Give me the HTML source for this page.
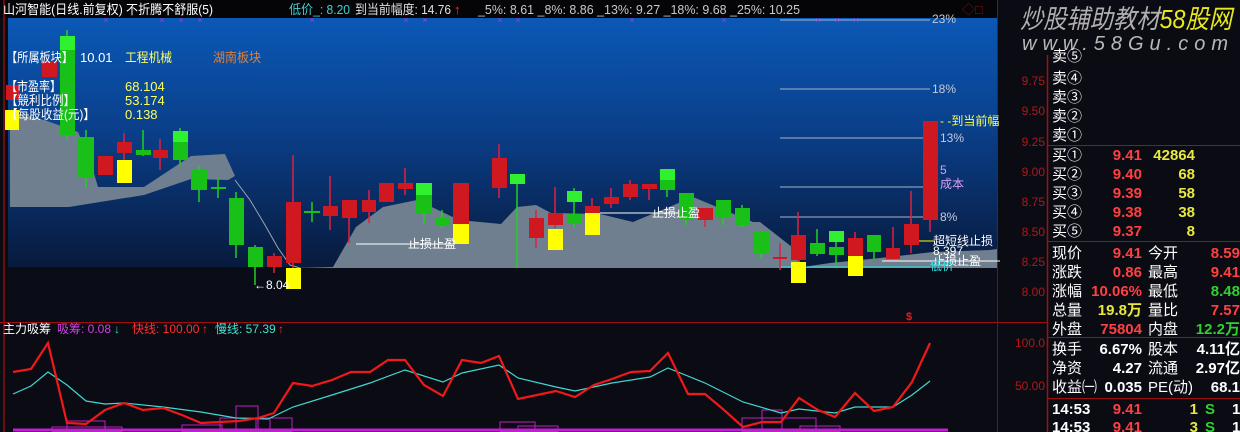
<!DOCTYPE html>
<html><head><meta charset="utf-8"><style>
html,body{margin:0;padding:0;background:#0b0b14;width:1240px;height:432px;overflow:hidden}
svg{display:block}
text{font-family:"Liberation Sans","WenQuanYi Zen Hei","Noto Sans CJK SC",sans-serif}
.rp{font-size:15px;fill:#fff}
.b{font-weight:bold}
</style></head><body>
<svg width="1240" height="432" viewBox="0 0 1240 432" xmlns="http://www.w3.org/2000/svg">
<defs>
<linearGradient id="bg" x1="0" y1="0" x2="0" y2="1">
<stop offset="0" stop-color="#0b58b6"/><stop offset="0.45" stop-color="#0a3f8a"/><stop offset="1" stop-color="#081a3c"/>
</linearGradient>
</defs>
<rect x="0" y="0" width="1240" height="432" fill="#0b0b14"/>
<rect x="0" y="0" width="998" height="18" fill="#050508"/>
<rect x="8" y="18" width="989" height="249" fill="url(#bg)"/>
<rect x="8" y="267" width="989" height="55" fill="#0a0c18"/>
<line x1="4" y1="0" x2="4" y2="432" stroke="#8a1010" stroke-width="1.5"/>
<line x1="997.5" y1="0" x2="997.5" y2="432" stroke="#7a1010"/>
<line x1="1047.5" y1="55" x2="1047.5" y2="432" stroke="#a01010" stroke-width="1.5"/>
<line x1="0" y1="322.5" x2="1048" y2="322.5" stroke="#a01010"/>
<polygon fill="#6f7f8f" points="10,118 30,116 50,122 78,132 90,160 98,187 144,187 191,156 225,154 235,176 228,180 191,179 144,195 69,207 10,207"/>
<polygon fill="#6f7f8f" points="290,268 333,267 356,227 383,207 417,200 459,220 501,224 517,207 536,205 551,213 600,214 633,222 693,197 753,222 760,222 792,247 803,267 830,263 880,258 933,252 990,250 997,249 997,268"/>
<polyline fill="none" stroke="#9aa6b2" stroke-width="1" points="235,180 250,200 265,225 278,248 290,265 300,268"/>
<g stroke="#a8b4c8" stroke-width="1">
<line x1="780" y1="20" x2="930" y2="20"/><line x1="780" y1="89" x2="930" y2="89"/>
<line x1="780" y1="138" x2="930" y2="138"/><line x1="780" y1="187" x2="930" y2="187"/>
<line x1="780" y1="217" x2="930" y2="217"/>
</g>
<line x1="780" y1="267" x2="930" y2="267" stroke="#30e0e0"/>
<line x1="882" y1="261" x2="1000" y2="261" stroke="#fff"/>
<line x1="356" y1="244" x2="455" y2="244" stroke="#fff"/>
<line x1="600" y1="213" x2="690" y2="213" stroke="#fff"/>
<line x1="918" y1="241" x2="935" y2="241" stroke="#ff0"/>
<g stroke-width="1.5">
<line x1="67" y1="30" x2="67" y2="140" stroke="#20d020"/>
<line x1="86" y1="130" x2="86" y2="187" stroke="#20d020"/>
<line x1="124" y1="133" x2="124" y2="167" stroke="#e02040"/>
<line x1="143" y1="130" x2="143" y2="156" stroke="#20d020"/>
<line x1="160" y1="139" x2="160" y2="170" stroke="#e02040"/>
<line x1="180" y1="128" x2="180" y2="165" stroke="#20d020"/>
<line x1="199" y1="165" x2="199" y2="202" stroke="#20d020"/>
<line x1="218" y1="178" x2="218" y2="198" stroke="#20d020"/>
<line x1="236" y1="192" x2="236" y2="258" stroke="#20d020"/>
<line x1="255" y1="245" x2="255" y2="285" stroke="#20d020"/>
<line x1="274" y1="253" x2="274" y2="273" stroke="#e02040"/>
<line x1="293" y1="155" x2="293" y2="270" stroke="#e02040"/>
<line x1="312" y1="202" x2="312" y2="222" stroke="#20d020"/>
<line x1="330" y1="176" x2="330" y2="230" stroke="#e02040"/>
<line x1="349" y1="200" x2="349" y2="243" stroke="#e02040"/>
<line x1="369" y1="190" x2="369" y2="223" stroke="#e02040"/>
<line x1="405" y1="168" x2="405" y2="195" stroke="#e02040"/>
<line x1="424" y1="183" x2="424" y2="224" stroke="#20d020"/>
<line x1="442" y1="210" x2="442" y2="228" stroke="#20d020"/>
<line x1="499" y1="144" x2="499" y2="198" stroke="#e02040"/>
<line x1="517" y1="174" x2="517" y2="268" stroke="#20d020"/>
<line x1="536" y1="210" x2="536" y2="248" stroke="#e02040"/>
<line x1="555" y1="187" x2="555" y2="228" stroke="#e02040"/>
<line x1="574" y1="188" x2="574" y2="228" stroke="#20d020"/>
<line x1="592" y1="198" x2="592" y2="232" stroke="#e02040"/>
<line x1="611" y1="188" x2="611" y2="208" stroke="#e02040"/>
<line x1="630" y1="180" x2="630" y2="200" stroke="#e02040"/>
<line x1="649" y1="184" x2="649" y2="200" stroke="#e02040"/>
<line x1="667" y1="169" x2="667" y2="197" stroke="#20d020"/>
<line x1="686" y1="193" x2="686" y2="225" stroke="#20d020"/>
<line x1="705" y1="208" x2="705" y2="227" stroke="#e02040"/>
<line x1="723" y1="200" x2="723" y2="225" stroke="#20d020"/>
<line x1="742" y1="205" x2="742" y2="227" stroke="#20d020"/>
<line x1="761" y1="232" x2="761" y2="259" stroke="#20d020"/>
<line x1="780" y1="243" x2="780" y2="270" stroke="#e02040"/>
<line x1="798" y1="212" x2="798" y2="262" stroke="#e02040"/>
<line x1="817" y1="229" x2="817" y2="256" stroke="#20d020"/>
<line x1="836" y1="231" x2="836" y2="265" stroke="#20d020"/>
<line x1="855" y1="232" x2="855" y2="256" stroke="#e02040"/>
<line x1="874" y1="235" x2="874" y2="259" stroke="#20d020"/>
<line x1="893" y1="227" x2="893" y2="259" stroke="#e02040"/>
<line x1="911" y1="191" x2="911" y2="253" stroke="#e02040"/>
<line x1="930" y1="121" x2="930" y2="232" stroke="#e02040"/>
</g>
<g fill="#d01820">
<rect x="6" y="85" width="14" height="15"/>
<rect x="42" y="61" width="15" height="16"/>
<rect x="117" y="142" width="15" height="11"/>
<rect x="98" y="156" width="15" height="19"/>
<rect x="153" y="150" width="15" height="8"/>
<rect x="267" y="256" width="15" height="11"/>
<rect x="286" y="202" width="15" height="61"/>
<rect x="323" y="206" width="15" height="10"/>
<rect x="342" y="200" width="15" height="18"/>
<rect x="362" y="200" width="14" height="12"/>
<rect x="379" y="183" width="15" height="19"/>
<rect x="398" y="183" width="15" height="6"/>
<rect x="453" y="183" width="16" height="41"/>
<rect x="492" y="158" width="15" height="30"/>
<rect x="529" y="218" width="15" height="20"/>
<rect x="548" y="213" width="15" height="12"/>
<rect x="585" y="206" width="15" height="7"/>
<rect x="604" y="197" width="15" height="7"/>
<rect x="623" y="184" width="15" height="13"/>
<rect x="642" y="184" width="15" height="5"/>
<rect x="698" y="208" width="15" height="12"/>
<rect x="773" y="257" width="14" height="2"/>
<rect x="791" y="235" width="15" height="25"/>
<rect x="848" y="238" width="15" height="18"/>
<rect x="886" y="248" width="14" height="11"/>
<rect x="904" y="224" width="15" height="21"/>
<rect x="923" y="121" width="15" height="99"/>
</g>
<g fill="#18c018">
<rect x="60" y="50" width="15" height="85"/>
<rect x="78" y="137" width="16" height="41"/>
<rect x="136" y="150" width="15" height="5"/>
<rect x="173" y="142" width="15" height="18"/>
<rect x="191" y="170" width="16" height="20"/>
<rect x="211" y="187" width="15" height="2"/>
<rect x="229" y="198" width="15" height="47"/>
<rect x="248" y="247" width="15" height="20"/>
<rect x="304" y="211" width="16" height="2"/>
<rect x="416" y="195" width="16" height="19"/>
<rect x="435" y="218" width="15" height="8"/>
<rect x="567" y="214" width="15" height="10"/>
<rect x="660" y="180" width="15" height="10"/>
<rect x="679" y="193" width="15" height="27"/>
<rect x="716" y="200" width="15" height="18"/>
<rect x="735" y="208" width="15" height="17"/>
<rect x="754" y="232" width="15" height="21"/>
<rect x="810" y="243" width="15" height="11"/>
<rect x="829" y="247" width="15" height="8"/>
<rect x="867" y="235" width="14" height="17"/>
</g>
<g fill="#30f030">
<rect x="60" y="36" width="15" height="14"/>
<rect x="173" y="131" width="15" height="11"/>
<rect x="416" y="183" width="16" height="12"/>
<rect x="510" y="174" width="15" height="10"/>
<rect x="567" y="191" width="15" height="11"/>
<rect x="660" y="169" width="15" height="11"/>
<rect x="829" y="231" width="15" height="11"/>
</g>
<g fill="#ffff00">
<rect x="5" y="110" width="14" height="20"/>
<rect x="117" y="160" width="15" height="23"/>
<rect x="286" y="268" width="15" height="21"/>
<rect x="453" y="224" width="16" height="20"/>
<rect x="548" y="229" width="15" height="21"/>
<rect x="585" y="213" width="15" height="22"/>
<rect x="791" y="262" width="15" height="21"/>
<rect x="848" y="256" width="15" height="20"/>
</g>
<g fill="#c030e0" font-size="9" text-anchor="middle">
<text x="106" y="23">×</text><text x="162" y="23">×</text><text x="181" y="23">×</text><text x="200" y="23">×</text><text x="312" y="23">×</text><text x="406" y="23">×</text><text x="425" y="23">×</text><text x="500" y="23">×</text><text x="518" y="23">×</text><text x="632" y="23">×</text><text x="724" y="23">×</text><text x="818" y="23">×</text><text x="837" y="23">×</text><text x="856" y="23">×</text>
</g>
<text x="3" y="14" font-size="13" fill="#fff" textLength="210" lengthAdjust="spacingAndGlyphs">山河智能(日线.前复权) 不折腾不舒服(5)</text>
<text x="289" y="14" font-size="13" fill="#40d0d0" textLength="61" lengthAdjust="spacingAndGlyphs">低价_: 8.20</text>
<text x="355" y="14" font-size="13" fill="#e0e0e0" textLength="96" lengthAdjust="spacingAndGlyphs">到当前幅度: 14.76</text>
<text x="454" y="14" font-size="13" fill="#ff3030">↑</text>
<text x="478" y="14" font-size="13" fill="#c8c8c8" textLength="322" lengthAdjust="spacingAndGlyphs">_5%: 8.61  _8%: 8.86  _13%: 9.27  _18%: 9.68  _25%: 10.25</text>
<text x="962" y="14" font-size="13" fill="#801010">◇□</text>
<g font-size="13">
<text x="6" y="62" fill="#fff" textLength="67" lengthAdjust="spacingAndGlyphs">【所属板块】</text><text x="80" y="62" fill="#fff">10.01</text>
<text x="125" y="62" fill="#ffff60" textLength="47" lengthAdjust="spacingAndGlyphs">工程机械</text>
<text x="213" y="62" fill="#e08030" textLength="48" lengthAdjust="spacingAndGlyphs">湖南板块</text>
<text x="6" y="91" fill="#fff" textLength="55" lengthAdjust="spacingAndGlyphs">【市盈率】</text><text x="125" y="91" fill="#ffff60">68.104</text>
<text x="6" y="105" fill="#fff" textLength="69" lengthAdjust="spacingAndGlyphs">【競利比例】</text><text x="125" y="105" fill="#ffff60">53.174</text>
<text x="6" y="119" fill="#fff" textLength="89" lengthAdjust="spacingAndGlyphs">【每股收益(元)】</text><text x="125" y="119" fill="#ffff60">0.138</text>
</g>
<g font-size="12" fill="#fff">
<text x="408" y="248">止损止盈</text>
<text x="652" y="217">止损止盈</text>
<text x="254" y="289">←8.04</text>
<text x="933" y="245">超短线止损</text>
<text x="933" y="255">8.397</text>
<text x="933" y="265">止损止盈</text>
</g>
<text x="930" y="270" font-size="12" fill="#30e0e0">低价</text>
<g font-size="12" fill="#c8c8d8">
<text x="932" y="23">23%</text><text x="932" y="93">18%</text><text x="940" y="142">13%</text><text x="940" y="221">8%</text>
</g>
<text x="940" y="174" font-size="12" fill="#d8a0f0">5</text>
<text x="940" y="188" font-size="12" fill="#d8a0f0">成本</text>
<text x="940" y="125" font-size="12" fill="#ffff40">- -到当前幅</text>
<text x="906" y="320" font-size="11" fill="#e02020" font-weight="bold">$</text>
<g font-size="12">
<text x="3" y="333" fill="#fff">主力吸筹</text>
<text x="57" y="333" fill="#d040e0">吸筹: 0.08</text>
<text x="114" y="333" fill="#30d0e0">↓</text>
<text x="132" y="333" fill="#ff3030">快线: 100.00</text>
<text x="202" y="333" fill="#ff3030">↑</text>
<text x="215" y="333" fill="#40e0d0">慢线: 57.39</text>
<text x="278" y="333" fill="#ff3030">↑</text>
</g>
<g fill="none" stroke="#c020c0" stroke-width="1">
<rect x="67" y="421" width="38" height="10"/><rect x="52" y="427" width="70" height="5"/>
<rect x="182" y="425" width="40" height="7"/><rect x="236" y="406" width="22" height="26"/><rect x="220" y="418" width="50" height="14"/><rect x="256" y="418" width="36" height="14"/>
<rect x="500" y="422" width="35" height="10"/><rect x="518" y="426" width="40" height="6"/>
<rect x="762" y="410" width="20" height="22"/><rect x="742" y="418" width="74" height="14"/><rect x="800" y="426" width="40" height="6"/>
</g>
<line x1="13" y1="430" x2="948" y2="430" stroke="#c020d0" stroke-width="3"/>
<polyline fill="none" stroke="#40d8d0" stroke-width="1.2" points="13,394 31,386 48,372 67,385 86,401 105,404 124,403 163,407 201,412 236,418 268,419 293,407 332,395 370,383 405,370 443,382 462,373 499,365 518,378 556,387 575,391 612,383 650,377 668,368 705,383 743,402 781,413 799,409 835,413 855,407 893,407 912,395 930,381"/>
<polyline fill="none" stroke="#f01818" stroke-width="2.2" points="13,372 31,369 48,343 67,423 86,424 105,410 124,403 143,410 163,408 182,415 201,423 220,422 239,421 258,418 274,413 293,383 312,386 332,380 351,372 370,372 388,360 405,360 424,385 443,396 462,360 481,363 499,356 518,399 537,395 556,391 575,397 594,385 612,379 631,372 650,371 668,353 688,394 705,394 724,410 743,427 762,422 781,422 799,398 818,410 835,417 855,393 874,411 893,407 912,382 930,343"/>
<g font-size="12" fill="#b01818" text-anchor="end">
<text x="1045" y="85">9.75</text><text x="1045" y="115">9.50</text><text x="1045" y="146">9.25</text><text x="1045" y="176">9.00</text><text x="1045" y="206">8.75</text><text x="1045" y="236">8.50</text><text x="1045" y="266">8.25</text><text x="1045" y="296">8.00</text><text x="1045" y="347">100.0</text><text x="1045" y="390">50.00</text>
</g>
<text x="1020" y="28" font-size="26" font-style="italic" fill="#b0b0b0" textLength="212" lengthAdjust="spacingAndGlyphs">炒股辅助教材<tspan fill="#e8e820">58股网</tspan></text>
<text x="1022" y="50" font-size="20" font-style="italic" fill="#b8b8b8" textLength="206" lengthAdjust="spacing">www.58Gu.com</text>
<g class="rp">
<text x="1052" y="61">卖⑤</text><text x="1052" y="83">卖④</text><text x="1052" y="102">卖③</text><text x="1052" y="121">卖②</text><text x="1052" y="140">卖①</text>
<text x="1052" y="160">买①</text><text x="1052" y="179">买②</text><text x="1052" y="198">买③</text><text x="1052" y="217">买④</text><text x="1052" y="236">买⑤</text>
</g>
<line x1="1048" y1="145.5" x2="1240" y2="145.5" stroke="#a01010"/>
<g class="rp b" text-anchor="end" font-size="14">
<g fill="#ff4040"><text x="1142" y="160">9.41</text><text x="1142" y="179">9.40</text><text x="1142" y="198">9.39</text><text x="1142" y="217">9.38</text><text x="1142" y="236">9.37</text></g>
<g fill="#e8e840"><text x="1195" y="160">42864</text><text x="1195" y="179">68</text><text x="1195" y="198">58</text><text x="1195" y="217">38</text><text x="1195" y="236">8</text></g>
</g>
<line x1="1048" y1="241.5" x2="1240" y2="241.5" stroke="#a01010"/>
<g class="rp">
<text x="1052" y="258">现价</text><text x="1052" y="277">涨跌</text><text x="1052" y="296">涨幅</text><text x="1052" y="315">总量</text><text x="1052" y="334">外盘</text>
<text x="1148" y="258">今开</text><text x="1148" y="277">最高</text><text x="1148" y="296">最低</text><text x="1148" y="315">量比</text><text x="1148" y="334">内盘</text>
</g>
<g class="rp b" text-anchor="end" font-size="14">
<text x="1142" y="258" fill="#ff4040">9.41</text><text x="1142" y="277" fill="#ff4040">0.86</text><text x="1142" y="296" fill="#ff4040">10.06%</text><text x="1142" y="315" fill="#e8e840">19.8万</text><text x="1142" y="334" fill="#ff4040">75804</text>
<text x="1240" y="258" fill="#ff4040">8.59</text><text x="1240" y="277" fill="#ff4040">9.41</text><text x="1240" y="296" fill="#30d030">8.48</text><text x="1240" y="315" fill="#ff4040">7.57</text><text x="1240" y="334" fill="#30d030">12.2万</text>
</g>
<line x1="1048" y1="337.5" x2="1240" y2="337.5" stroke="#a01010"/>
<g class="rp">
<text x="1052" y="354">换手</text><text x="1052" y="373">净资</text><text x="1052" y="392">收益㈠</text>
<text x="1148" y="354">股本</text><text x="1148" y="373">流通</text><text x="1148" y="392">PE(动)</text>
</g>
<g class="rp b" text-anchor="end" font-size="14" fill="#fff">
<text x="1142" y="354">6.67%</text><text x="1142" y="373">4.27</text><text x="1142" y="392">0.035</text>
<text x="1240" y="354">4.11亿</text><text x="1240" y="373">2.97亿</text><text x="1240" y="392">68.1</text>
</g>
<line x1="1048" y1="398.5" x2="1240" y2="398.5" stroke="#a01010"/>
<g class="rp b" font-size="14">
<text x="1052" y="414">14:53</text><text x="1052" y="432">14:53</text>
<text x="1142" y="414" text-anchor="end" fill="#ff4040">9.41</text><text x="1142" y="432" text-anchor="end" fill="#ff4040">9.41</text>
<text x="1198" y="414" text-anchor="end" fill="#e8e840">1</text><text x="1198" y="432" text-anchor="end" fill="#e8e840">3</text>
<text x="1205" y="414" fill="#30d030">S</text><text x="1205" y="432" fill="#30d030">S</text>
<text x="1232" y="414" fill="#fff">1</text><text x="1232" y="432" fill="#fff">1</text>
</g>
</svg>
</body></html>
